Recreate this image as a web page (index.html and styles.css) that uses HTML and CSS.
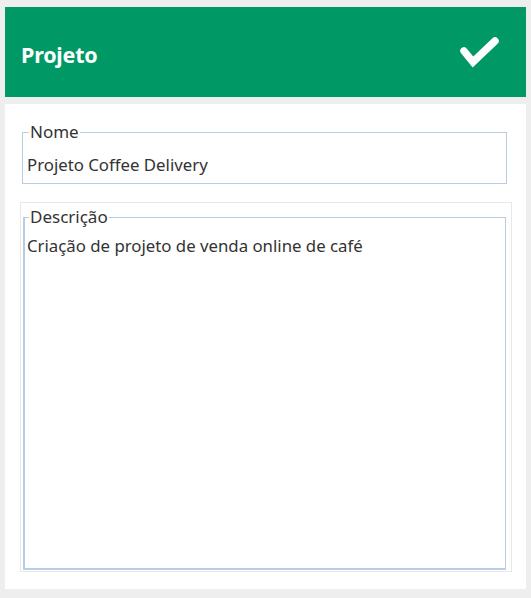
FILE: index.html
```html
<!DOCTYPE html>
<html lang="pt">
<head>
<meta charset="utf-8">
<title>Projeto</title>
<link rel="stylesheet" href="styles.css">
</head>
<body>
<div class="app">
  <header class="topbar">
    <h1 class="title">Projeto</h1>
    <svg class="check" width="44" height="40" viewBox="0 0 44 40" aria-hidden="true">
      <path d="M6 19 L15 30 L37 9" fill="none" stroke="#fff" stroke-width="7.5" stroke-linecap="round" stroke-linejoin="miter"/>
    </svg>
  </header>
  <main class="panel">
    <fieldset class="field field-name">
      <legend class="legend">Nome</legend>
      <div class="value">Projeto Coffee Delivery</div>
    </fieldset>
    <div class="desc-box">
      <fieldset class="field field-desc">
        <legend class="legend">Descrição</legend>
        <div class="value value-desc">Criação de projeto de venda online de café</div>
      </fieldset>
    </div>
  </main>
</div>
</body>
</html>
```
FILE: styles.css
```css
html, body {
  margin: 0;
  padding: 0;
  background: #eeeeee;
  font-family: "Noto Sans", "Open Sans", sans-serif;
  color: #333333;
}

.app {
  display: flex;
  flex-direction: column;
  gap: 7px;
  padding: 7px 5px 9px 5px;
  height: 598px;
  box-sizing: border-box;
}

.topbar {
  height: 90px;
  flex: none;
  background: #009966;
  display: flex;
  align-items: center;
  justify-content: space-between;
  padding: 0 24px 0 16px;
  box-sizing: border-box;
}

.title {
  margin: 0;
  padding-top: 5px;
  color: #ffffff;
  font-size: 21.5px;
  font-weight: 700;
  letter-spacing: -0.2px;
  line-height: 26px;
}

.check {
  display: block;
}

.panel {
  flex: 1;
  background: #ffffff;
  display: flex;
  flex-direction: column;
  padding: 18px 14px 17px 15px;
  box-sizing: border-box;
}

.field {
  margin: 0;
  min-width: 0;
}

.legend {
  font-size: 17px;
  line-height: 20px;
  padding: 0 1px;
  margin-left: 2px;
  color: #333333;
}

.value {
  font-size: 16.8px;
  line-height: 20px;
  color: #333333;
}

.field-name {
  margin: 0 5px 0 2px;
  border: 1px solid #b8cde4;
  padding: 0 4px 8px 4px;
}

.field-name .value {
  padding-top: 13px;
}

.desc-box {
  margin-top: 18px;
  flex: 1;
  border: 1px solid #e8e8e8;
  padding: 4px 5px 1px 2px;
  display: flex;
  flex-direction: column;
}

.field-desc {
  flex: 1;
  border: 1px solid #b8cde4;
  border-left-width: 2px;
  border-bottom-width: 2px;
  padding: 0 4px 0 2px;
}

.value-desc {
  padding-top: 9px;
}
```
